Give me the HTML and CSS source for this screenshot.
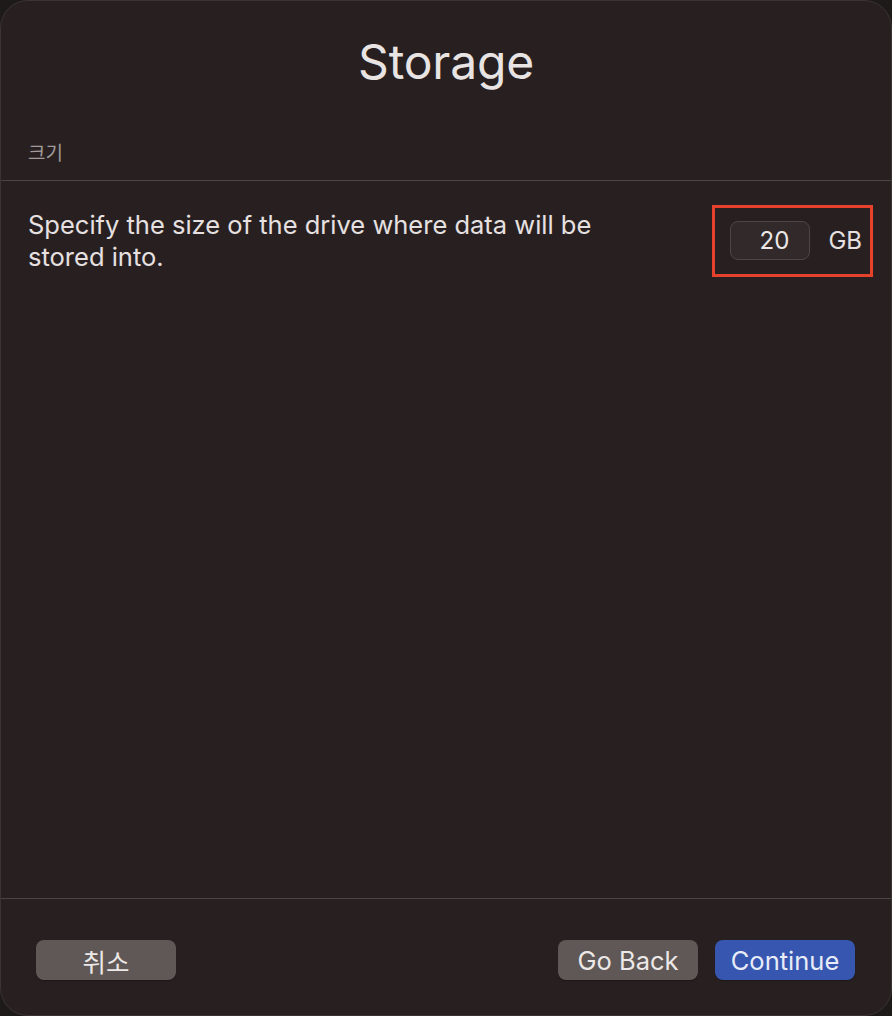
FILE: index.html
```html
<!DOCTYPE html>
<html lang="ko">
<head>
<meta charset="utf-8">
<title>Storage</title>
<link rel="stylesheet" href="styles.css">
</head>
<body>
<div class="window">
  <header class="header">
    <h1 class="title">Storage</h1>
  </header>
  <div class="section-label">크기</div>
  <div class="content">
    <div class="row">
      <p class="desc">Specify the size of the drive where data will be stored into.</p>
      <div class="size-box">
        <div class="size-input">20</div>
        <span class="unit">GB</span>
      </div>
    </div>
  </div>
  <footer class="footer">
    <button class="btn">취소</button>
    <div class="footer-right">
      <button class="btn">Go Back</button>
      <button class="btn btn-primary">Continue</button>
    </div>
  </footer>
</div>
</body>
</html>
```

FILE: styles.css
```css
html, body {
  margin: 0;
  padding: 0;
  background: #1f1a1a;
}
body {
  width: 892px;
  height: 1016px;
  font-family: "Inter", "Noto Sans CJK KR", sans-serif;
  color: #e6e1e0;
}
.window {
  box-sizing: border-box;
  width: 892px;
  height: 1016px;
  background: #282020;
  border-radius: 28px;
  border: 1px solid #3a3434;
  display: flex;
  flex-direction: column;
  overflow: hidden;
}
.header {
  padding-top: 28px;
  text-align: center;
}
.title {
  margin: 0;
  font-size: 48px;
  font-weight: 400;
  line-height: 66px;
  color: #e8e4e3;
  letter-spacing: -0.2px;
}
.section-label {
  margin-top: 44px;
  padding: 0 27px 15px;
  font-size: 19px;
  line-height: 26px;
  color: #a19b9a;
  border-bottom: 1px solid #4b4545;
  font-family: "Noto Sans CJK KR", sans-serif;
}
.content {
  flex: 1;
}
.row {
  display: flex;
  align-items: center;
  justify-content: space-between;
  padding: 24px 18px 0 27px;
}
.desc {
  margin: 0;
  width: 610px;
  font-size: 25.5px;
  line-height: 32px;
  color: #e6e1e0;
}
.size-box {
  display: flex;
  align-items: center;
  gap: 18px;
  border: 3px solid #e5412b;
  padding: 13px 8px 14px 15px;
}
.size-input {
  box-sizing: border-box;
  width: 80px;
  height: 39px;
  border-radius: 8px;
  background: #322a2a;
  border: 1px solid #4d4646;
  font-size: 24px;
  line-height: 37px;
  text-align: right;
  padding-right: 20px;
  color: #ece8e7;
}
.unit {
  font-size: 24px;
  color: #e6e1e0;
}
.footer {
  border-top: 1px solid #4b4545;
  display: flex;
  justify-content: space-between;
  padding: 41px 36px 35px 35px;
}
.footer-right {
  display: flex;
  gap: 17px;
}
.btn {
  width: 140px;
  height: 40px;
  border: none;
  border-radius: 8px;
  background: #5f5856;
  color: #ece8e7;
  font-family: "Inter", "Noto Sans CJK KR", sans-serif;
  font-size: 25.5px;
  padding: 0;
  box-shadow: 0 1px 1px rgba(0,0,0,0.3);
}
.btn-primary {
  background: #3656b0;
  color: #e8ecf7;
}
```
